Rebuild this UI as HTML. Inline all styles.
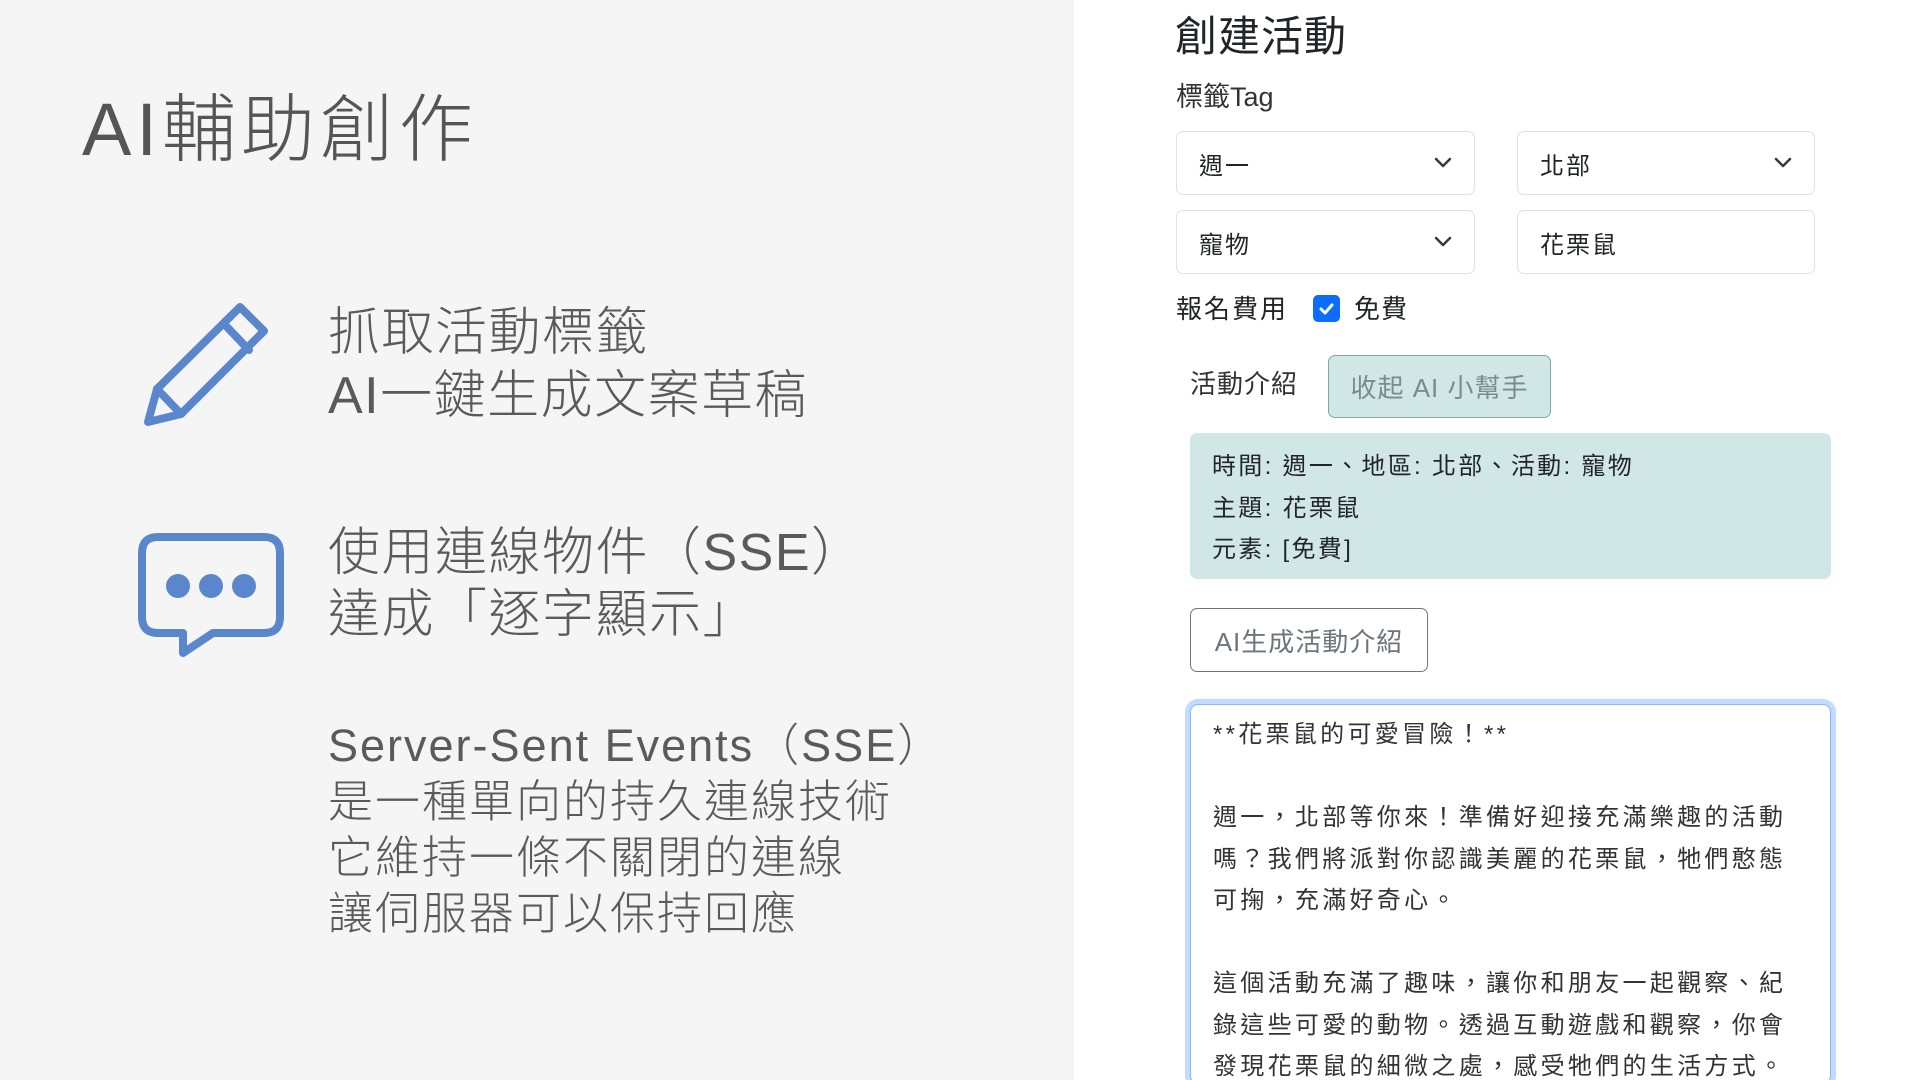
<!DOCTYPE html>
<html><head><meta charset="utf-8"><style>
*{margin:0;padding:0;box-sizing:border-box}
html,body{width:1920px;height:1080px;overflow:hidden}
body{background:#fff;position:relative;font-family:"Liberation Sans","Noto Sans CJK TC",sans-serif}
.left{position:absolute;left:0;top:0;width:1074px;height:1080px;background:#f5f5f5;color:#5a5a5a}
.a{position:absolute;white-space:nowrap}
.lt{font-family:"Liberation Sans","Noto Sans CJK TC",sans-serif;font-weight:300}
.r{color:#212529}
.box{position:absolute;border:1px solid #dee2e6;border-radius:7px;background:#fff;font-size:24px;color:#212529;padding-left:22px;display:flex;align-items:center;letter-spacing:2px}
.chev{position:absolute;right:22px;top:50%;margin-top:-6px}
</style></head><body>
<div class="left">
<div class="a lt" style="left:82px;top:80px;font-size:74px;line-height:100px;color:#555;letter-spacing:5px">AI輔助創作</div>
<svg class="a" style="left:0;top:0" width="400" height="700" viewBox="0 0 400 700">
<g fill="none" stroke="#5a87cc" stroke-width="8" stroke-linejoin="round" stroke-linecap="round">
<path d="M148 422 L157 389 L240 307 L264 331 L181 414 Z"/>
<path d="M227 327 L249 350"/>
<path d="M157 389 L181 414"/>
<path d="M158 633 H183 V653 L213 633 H264 Q280 633 280 617 V553 Q280 537 264 537 H158 Q142 537 142 553 V617 Q142 633 158 633 Z"/>
</g>
<g fill="#5a87cc"><circle cx="178" cy="586" r="12"/><circle cx="211" cy="586" r="12"/><circle cx="244" cy="586" r="12"/></g>
</svg>
<div class="a lt" style="left:328px;top:302px;font-size:52px;line-height:63px;letter-spacing:1.5px">抓取活動標籤<br>AI一鍵生成文案草稿</div>
<div class="a lt" style="left:328px;top:522px;font-size:52px;line-height:62px;letter-spacing:1.5px">使用連線物件（SSE）<br>達成「逐字顯示」</div>
<div class="a lt" style="left:328px;top:718px;font-size:45px;line-height:56px;letter-spacing:2px">Server-Sent Events（SSE）<br>是一種單向的持久連線技術<br>它維持一條不關閉的連線<br>讓伺服器可以保持回應</div>
</div>

<div class="a r" style="left:1175px;top:10px;font-size:42px;line-height:54px;letter-spacing:1px">創建活動</div>
<div class="a r" style="left:1176px;top:79px;font-size:27px;line-height:36px;color:#333">標籤Tag</div>

<div class="box" style="left:1176px;top:131px;width:299px;height:64px">週一<svg class="chev" width="18" height="12" viewBox="0 0 18 12"><path d="M2 2l7 7 7-7" fill="none" stroke="#343a40" stroke-width="2.5" stroke-linecap="round" stroke-linejoin="round"/></svg></div>
<div class="box" style="left:1517px;top:131px;width:298px;height:64px">北部<svg class="chev" width="18" height="12" viewBox="0 0 18 12"><path d="M2 2l7 7 7-7" fill="none" stroke="#343a40" stroke-width="2.5" stroke-linecap="round" stroke-linejoin="round"/></svg></div>
<div class="box" style="left:1176px;top:210px;width:299px;height:64px">寵物<svg class="chev" width="18" height="12" viewBox="0 0 18 12"><path d="M2 2l7 7 7-7" fill="none" stroke="#343a40" stroke-width="2.5" stroke-linecap="round" stroke-linejoin="round"/></svg></div>
<div class="box" style="left:1517px;top:210px;width:298px;height:64px">花栗鼠</div>

<div class="a r" style="left:1176px;top:292px;font-size:26px;line-height:34px;letter-spacing:2px">報名費用</div>
<div class="a" style="left:1313px;top:295px;width:27px;height:27px;border-radius:5px;background:#0d6efd"><svg width="27" height="27" viewBox="0 0 27 27"><path d="M8 14l4 4 7-8" fill="none" stroke="#fff" stroke-width="3" stroke-linecap="round" stroke-linejoin="round"/></svg></div>
<div class="a r" style="left:1354px;top:292px;font-size:26px;line-height:34px;letter-spacing:1px">免費</div>

<div class="a" style="left:1190px;top:367px;font-size:26px;line-height:34px;color:#333;letter-spacing:1px">活動介紹</div>
<div class="a" style="left:1328px;top:355px;width:223px;height:63px;border:1.5px solid #7fa7a7;border-radius:7px;background:#d1e7e6;color:#7b8a8b;font-size:26px;display:flex;align-items:center;justify-content:center;letter-spacing:1px">收起 AI 小幫手</div>

<div class="a r" style="left:1190px;top:433px;width:641px;height:146px;border-radius:7px;background:#d1e7e5;padding:13px 22px;font-size:24px;line-height:41.5px;letter-spacing:2.3px">時間: 週一、地區: 北部、活動: 寵物<br>主題: 花栗鼠<br>元素: [免費]</div>

<div class="a" style="left:1190px;top:608px;width:238px;height:64px;border:1.5px solid #6c757d;border-radius:7px;color:#6c757d;font-size:26px;display:flex;align-items:center;justify-content:center;letter-spacing:1px">AI生成活動介紹</div>

<div class="a r" style="left:1190px;top:704px;width:641px;height:380px;border:1px solid #86b7fe;border-radius:8px;box-shadow:0 0 0 5px rgba(13,110,253,.25);background:#fff;padding:9px 22px;font-size:24px;line-height:41.5px;color:#333;letter-spacing:3.3px">**花栗鼠的可愛冒險！**<br><br>週一，北部等你來！準備好迎接充滿樂趣的活動<br>嗎？我們將派對你認識美麗的花栗鼠，牠們憨態<br>可掬，充滿好奇心。<br><br>這個活動充滿了趣味，讓你和朋友一起觀察、紀<br>錄這些可愛的動物。透過互動遊戲和觀察，你會<br>發現花栗鼠的細微之處，感受牠們的生活方式。</div>
</body></html>
